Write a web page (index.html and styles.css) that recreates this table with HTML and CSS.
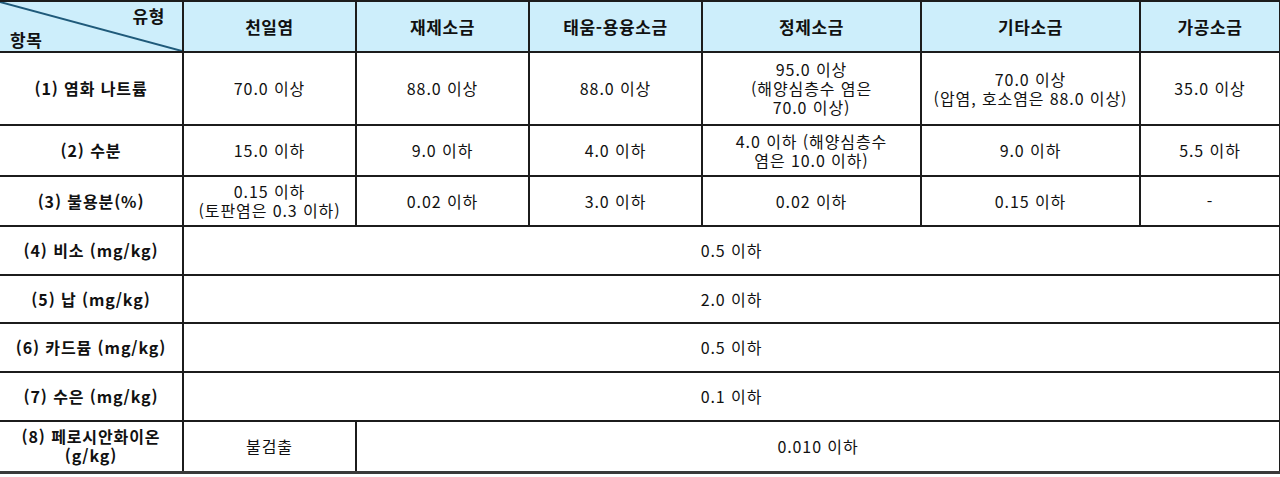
FILE: index.html
```html
<!DOCTYPE html>
<html lang="ko">
<head>
<meta charset="utf-8">
<link rel="stylesheet" href="styles.css">
</head>
<body>
<table class="spec">
  <colgroup>
    <col class="c-item">
    <col class="c-a">
    <col class="c-a">
    <col class="c-a">
    <col class="c-b">
    <col class="c-b">
    <col class="c-c">
  </colgroup>
  <thead>
    <tr class="r-head">
      <th class="corner">
        <svg class="diag" viewBox="0 0 100 100" preserveAspectRatio="none"><line x1="0" y1="0" x2="100" y2="100" /></svg>
        <span class="corner-type">유형</span>
        <span class="corner-item">항목</span>
      </th>
      <th>천일염</th>
      <th>재제소금</th>
      <th>태움-용융소금</th>
      <th>정제소금</th>
      <th>기타소금</th>
      <th>가공소금</th>
    </tr>
  </thead>
  <tbody>
    <tr class="r1">
      <td class="item">(1) 염화 나트륨</td>
      <td>70.0 이상</td>
      <td>88.0 이상</td>
      <td>88.0 이상</td>
      <td>95.0 이상<br>(해양심층수 염은<br>70.0 이상)</td>
      <td>70.0 이상<br>(압염, 호소염은 88.0 이상)</td>
      <td>35.0 이상</td>
    </tr>
    <tr class="r2">
      <td class="item">(2) 수분</td>
      <td>15.0 이하</td>
      <td>9.0 이하</td>
      <td>4.0 이하</td>
      <td>4.0 이하 (해양심층수<br>염은 10.0 이하)</td>
      <td>9.0 이하</td>
      <td>5.5 이하</td>
    </tr>
    <tr class="r3">
      <td class="item">(3) 불용분(%)</td>
      <td>0.15 이하<br>(토판염은 0.3 이하)</td>
      <td>0.02 이하</td>
      <td>3.0 이하</td>
      <td>0.02 이하</td>
      <td>0.15 이하</td>
      <td>-</td>
    </tr>
    <tr class="r4">
      <td class="item">(4) 비소 (mg/kg)</td>
      <td colspan="6">0.5 이하</td>
    </tr>
    <tr class="r5">
      <td class="item">(5) 납 (mg/kg)</td>
      <td colspan="6">2.0 이하</td>
    </tr>
    <tr class="r6">
      <td class="item">(6) 카드뮴 (mg/kg)</td>
      <td colspan="6">0.5 이하</td>
    </tr>
    <tr class="r7">
      <td class="item">(7) 수은 (mg/kg)</td>
      <td colspan="6">0.1 이하</td>
    </tr>
    <tr class="r8">
      <td class="item">(8) 페로시안화이온<br>(g/kg)</td>
      <td>불검출</td>
      <td colspan="5">0.010 이하</td>
    </tr>
  </tbody>
</table>
</body>
</html>
```
FILE: styles.css
```css
html, body {
  margin: 0;
  padding: 0;
  background: #ffffff;
}

body {
  font-family: "Noto Sans CJK KR", "Noto Sans", sans-serif;
  color: #111111;
}

.spec {
  border-collapse: collapse;
  table-layout: fixed;
  width: 1281px;
  margin-top: 0;
}

.c-item { width: 183px; }
.c-a { width: 173px; }
.c-b { width: 219px; }
.c-c { width: 140px; }

.spec th,
.spec td {
  border: 2px solid #1c1c1c;
  text-align: center;
  vertical-align: middle;
  padding: 0 1px;
  font-size: 16px;
  letter-spacing: 0.9px;
  line-height: 19px;
}

.spec th:first-child,
.spec td:first-child {
  border-left: none;
}

.spec thead th {
  background: #cdeefb;
  font-weight: 700;
  font-size: 17px;
  letter-spacing: 0.6px;
}

.spec td.item {
  font-weight: 700;
}

.spec tbody tr:last-child td {
  border-bottom: 3px solid #3a3a3a;
}

.r-head { height: 51px; }
.r1 { height: 73px; }
.r2 { height: 51px; }
.r3 { height: 50px; }
.r4 { height: 49px; }
.r5 { height: 48px; }
.r6 { height: 49px; }
.r7 { height: 49px; }
.r8 { height: 51px; }

.corner {
  position: relative;
  padding: 0;
}

.diag {
  position: absolute;
  left: 0;
  top: 0;
  width: 100%;
  height: 100%;
}

.diag line {
  stroke: #1f5a7a;
  stroke-width: 2;
  vector-effect: non-scaling-stroke;
}

.corner-type {
  position: absolute;
  right: 17px;
  top: 4px;
}

.corner-item {
  position: absolute;
  left: 10px;
  bottom: 2px;
}
```
